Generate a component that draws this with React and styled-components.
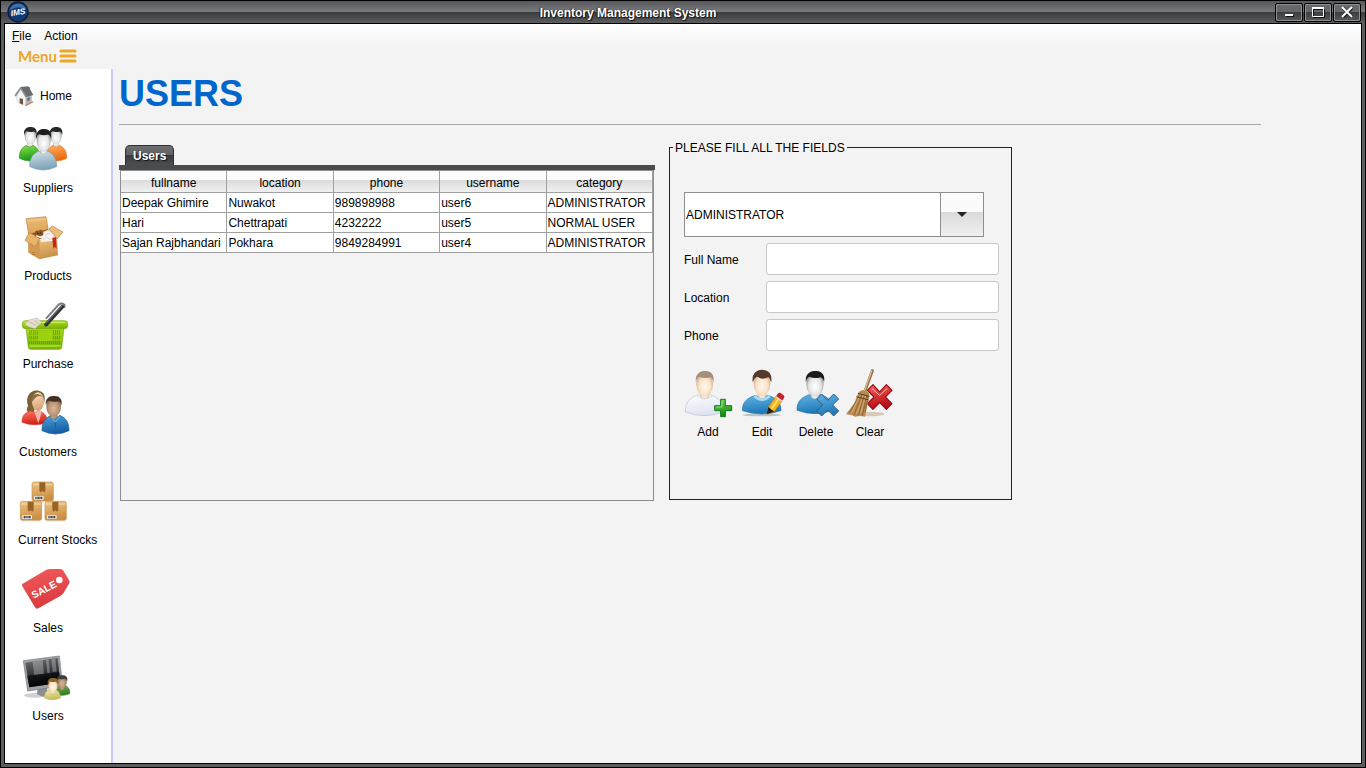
import React, { useState } from "react";
import styled, { createGlobalStyle } from "styled-components";

const GlobalStyle = createGlobalStyle`
  *, *::before, *::after { box-sizing: border-box; }
  body {
    margin: 0;
    background: #f3f3f3;
    color: #000;
    font: 12px/16px "Liberation Sans", Arial, sans-serif;
  }
  button, input, select { font: inherit; color: inherit; }
`;

/* ---------- window frame ---------- */

const Frame = styled.div`
  display: flex;
  flex-direction: column;
  min-height: 100vh;
  padding: 0 3px 3px;
  border: 1px solid #000;
  background: #5c5d5f;
`;

const TitleBar = styled.header`
  display: flex;
  align-items: center;
  height: 22px;
  margin: 0 -3px;
  padding: 0 4px 0 6px;
  background: linear-gradient(#55565a 0, #7c7c7e 11px, #3b3c3e 11px, #5c5d5f 22px);
`;

const WindowTitle = styled.div`
  flex: 1;
  padding: 2px 48px 0 0;
  text-align: center;
  font-weight: bold;
  color: #fff;
  text-shadow: 1px 1px 1px #111, -1px 0 1px #222;
  white-space: nowrap;
`;

const WindowButtons = styled.div`
  display: flex;
  gap: 1px;
`;

const WindowButton = styled.button`
  display: grid;
  place-items: center;
  width: 28px;
  height: 19px;
  padding: 0;
  border: 1px solid #000;
  border-radius: 2px;
  box-shadow: inset 0 0 0 1px #8d8f90;
  background: linear-gradient(#67686a 0 50%, #3d3e40 50%, #58595b);
`;

const Client = styled.div`
  flex: 1;
  display: flex;
  flex-direction: column;
  border: 1px solid #000;
  background: #f3f3f3;
`;

const MenuBar = styled.nav`
  display: flex;
  gap: 13px;
  height: 22px;
  padding: 4px 7px 2px;
  background: linear-gradient(#fff, #f3f3f3);
`;

const MenuButton = styled.button`
  padding: 0;
  border: 0;
  background: none;
`;

const MenuToggle = styled.button`
  display: flex;
  align-items: center;
  align-self: flex-start;
  gap: 2px;
  height: 23px;
  padding: 0 13px 3px;
  border: 0;
  background: none;
  color: #eda623;
  font: 700 15px/20px Lato, sans-serif;
`;

const Body = styled.div`
  flex: 1;
  display: flex;
`;

/* ---------- sidebar ---------- */

const Sidebar = styled.nav`
  flex: 0 0 108px;
  display: flex;
  flex-direction: column;
  align-items: flex-start;
  border-right: 2px solid #c9c9fb;
  background: #fff;
`;

const HomeButton = styled.button`
  display: flex;
  align-items: center;
  gap: 5px;
  height: 53px;
  padding: 0 8px;
  border: 0;
  background: none;
`;

const NavButton = styled.button`
  display: flex;
  flex-direction: column;
  gap: 6px;
  height: 88px;
  min-width: 58px;
  margin-left: 13px;
  padding: 0;
  border: 0;
  background: none;
  text-align: center;
`;

const NavLabel = styled.span`
  min-width: 60px;
  white-space: nowrap;
`;

/* ---------- content ---------- */

const Main = styled.main`
  flex: 1;
  min-width: 0;
  padding: 0 100px 24px 6px;
`;

const Heading = styled.h1`
  margin: 0 0 15px;
  padding: 1px 0 6px;
  border-bottom: 1px solid #a9a9a9;
  font-size: 36px;
  line-height: 48px;
  color: #0066cc;
`;

const Panels = styled.div`
  display: flex;
  align-items: flex-start;
  gap: 14px;
`;

const TablePanel = styled.section`
  flex: 0 1 536px;
  display: flex;
  flex-direction: column;
  min-height: 361px;
  padding-top: 5px;
`;

const TabStrip = styled.div`
  padding: 0 6px;
  border-bottom: 5px solid #4a4b4d;
`;

const Tab = styled.button`
  display: block;
  height: 20px;
  padding: 0 7px;
  border: 1px solid #2e2f31;
  border-bottom: 0;
  border-radius: 5px 5px 0 0;
  background: linear-gradient(#6d6e70, #5f6062 50%, #3a3b3d 50%, #4d4e50);
  color: #fff;
  font-weight: bold;
  text-shadow: 1px 1px 1px #111;
`;

const TableArea = styled.div`
  flex: 1;
  margin: 0 1px;
  border: 1px solid #8e8e8e;
`;

const DataTable = styled.table`
  width: 100%;
  table-layout: fixed;
  border-collapse: separate;
  border-spacing: 0;
`;

const HeadCell = styled.th`
  height: 22px;
  padding: 2px 0 0;
  border-right: 1px solid #a0a0a0;
  border-bottom: 1px solid #a0a0a0;
  background: linear-gradient(#fbfbfb 0 45%, #dcdcdc 45%, #f0f0f0);
  font-weight: normal;
`;

const Cell = styled.td`
  height: 20px;
  padding: 0 1px;
  border-right: 1px solid #a0a0a0;
  border-bottom: 1px solid #a0a0a0;
  background: #fff;
  white-space: nowrap;
`;

const FormPanel = styled.fieldset`
  flex: 0 1 343px;
  min-width: 0;
  min-height: 360px;
  margin: 0;
  padding: 37px 12px 24px 14px;
  border: 1px solid #222;
`;

const Legend = styled.legend`
  margin-left: -11px;
  padding: 1px 2px 0;
  line-height: 14px;
`;

const SelectBox = styled.div`
  position: relative;
  max-width: 300px;
  margin-bottom: 6px;
`;

const Select = styled.select`
  display: block;
  width: 100%;
  height: 45px;
  padding: 0 44px 0 1px;
  border: 1px solid #8e8e8e;
  border-radius: 0;
  appearance: none;
  background: #fff;
`;

const SelectArrow = styled.span`
  position: absolute;
  inset: 0 0 0 auto;
  display: grid;
  place-items: center;
  width: 44px;
  border: 1px solid #8e8e8e;
  background: linear-gradient(#fbfbfb 0 45%, #dadada 45%, #f0f0f0);
  pointer-events: none;
`;

const Field = styled.div`
  display: grid;
  grid-template-columns: 82px 1fr;
  align-items: center;
  margin-bottom: 6px;
`;

const FieldLabel = styled.label`
  padding-top: 2px;
`;

const TextInput = styled.input`
  width: 100%;
  height: 32px;
  padding: 0 6px;
  border: 1px solid #c8c8c8;
  border-radius: 3px;
  background: #fff;
`;

const Actions = styled.div`
  display: flex;
  margin: 17px 0 0 -3px;
`;

const ActionButton = styled.button`
  width: 54px;
  padding: 0;
  border: 0;
  background: none;
  text-align: center;
`;

const ActionIcon = styled.svg`
  display: block;
  width: 54px;
  height: 52px;
  margin-bottom: 4px;
`;

const NavIcon = styled.svg`
  display: block;
  width: 52px;
  height: 52px;
`;

/* ---------- drawings ---------- */

const gradients = {
  green: ["#8fe052", "#179b12"],
  orange: ["#ffb066", "#ee6a08"],
  steel: ["#d6e3ea", "#7fa3b9"],
  red: ["#ff7a66", "#d81f16"],
  blue: ["#4fa3d8", "#155fa5"],
  sky: ["#62b4e4", "#1f79b8"],
  white: ["#ffffff", "#dfe2f0"],
  skin: ["#ffe6cd", "#d8a273"],
  card: ["#efc583", "#c98f45"],
  cardLight: ["#edbd78", "#dda55a"],
  lime: ["#b5e61a", "#7cb708"],
  tag: ["#f35b5c", "#d93a3f"],
  cream: ["#f4efb0", "#c7bd62"],
  leaf: ["#6fb551", "#367d25"],
  screen: ["#74777a", "#050505"],
  plus: ["#7cdc5c", "#118b12"],
  cross: ["#f7605c", "#b90c14"],
};

/* Faces are lit from the middle and shaded towards the rim. */
const faces = {
  grey: ["#ffffff", "#e4e4e4", "#8f8f8f"],
  pale: ["#fff8ec", "#f8e2c8", "#d3a67d"],
  tan: ["#d9b799", "#b99274", "#86614a"],
};

function Defs() {
  return (
    <svg width="0" height="0" style={{ display: "block", position: "absolute" }} aria-hidden="true">
      <defs>
        {Object.entries(gradients).map(([id, [from, to]]) => (
          <linearGradient key={id} id={id} x1="0" y1="0" x2="0.25" y2="1">
            <stop offset="0" stopColor={from} />
            <stop offset="1" stopColor={to} />
          </linearGradient>
        ))}
        {Object.entries(faces).map(([id, [light, mid, rim]]) => (
          <radialGradient key={id} id={id} cx="0.5" cy="0.6" r="0.55">
            <stop offset="0" stopColor={light} />
            <stop offset="0.65" stopColor={mid} />
            <stop offset="1" stopColor={rim} />
          </radialGradient>
        ))}
      </defs>
    </svg>
  );
}

/* Shoulders of a bust: x and y give the top left corner of the body. */
function Bust({ x, y, w, h, fill, edge }) {
  const d = `M${x} ${y + h * 0.82}C${x} ${y + h * 0.35} ${x + w * 0.12} ${y + h * 0.15} ${x + w * 0.34} ${y}
    Q${x + w * 0.5} ${y + h * 0.2} ${x + w * 0.66} ${y}C${x + w * 0.88} ${y + h * 0.15} ${x + w} ${y + h * 0.35} ${x + w} ${y + h * 0.82}
    Q${x + w * 0.5} ${y + h * 1.18} ${x} ${y + h * 0.82}Z`;
  return <path d={d} fill={`url(#${fill})`} stroke={edge} strokeWidth="2" />;
}

function Head({ cx, cy, rx, ry, skin, hair }) {
  const d = `M${cx - rx - 1} ${cy - ry * 0.1}C${cx - rx - 6} ${cy - ry * 0.8} ${cx - rx * 0.5} ${cy - ry - 4} ${cx} ${cy - ry - 2}
    C${cx + rx * 0.7} ${cy - ry - 4} ${cx + rx + 6} ${cy - ry * 0.8} ${cx + rx + 1} ${cy - ry * 0.1}
    Q${cx + rx} ${cy - ry * 0.5} ${cx + rx * 0.6} ${cy - ry * 0.55}Q${cx} ${cy - ry * 0.4} ${cx - rx * 0.65} ${cy - ry * 0.58}
    Q${cx - rx} ${cy - ry * 0.5} ${cx - rx - 1} ${cy - ry * 0.1}Z`;
  return (
    <g>
      <rect x={cx - rx * 0.5} y={cy + ry * 0.5} width={rx} height={ry * 0.7} rx={rx * 0.4} fill={`url(#${skin})`} />
      <ellipse cx={cx} cy={cy} rx={rx} ry={ry} fill={`url(#${skin})`} />
      <path d={d} fill={hair} />
    </g>
  );
}

function SuppliersIcon() {
  return (
    <>
      <Bust x={4} y={70} w={62} h={47} fill="green" edge="#29912a" />
      <Head cx={37} cy={42} rx={17} ry={25} skin="grey" hair="#25282a" />
      <Bust x={84} y={70} w={62} h={47} fill="orange" edge="#dd7425" />
      <Head cx={114} cy={42} rx={17} ry={25} skin="grey" hair="#25282a" />
      <Bust x={35} y={87} w={81} h={57} fill="steel" edge="#7898aa" />
      <Head cx={77} cy={56} rx={21} ry={33} skin="grey" hair="#1b1d1f" />
    </>
  );
}

function ProductsIcon() {
  return (
    <>
      <path d="M24 26L84 20L91 62L32 72Z" fill="url(#cardLight)" stroke="#b9803c" strokeWidth="2" />
      <path d="M25 33L85 27" stroke="#f7d9a2" strokeWidth="2" />
      <path d="M33 72L88 58L117 78L64 88Z" fill="#8c5a25" />
      <path d="M54 80L58 66L65 62L73 67L80 64L90 60L101 67L114 74L112 84L86 90Z" fill="#f4f1ee" />
      <path d="M50 70Q52 58 61 63Q70 55 74 65Q80 70 73 77Q60 82 50 70Z" fill="#8c5420" />
      <path d="M57 70l5 2m5-5l3 4" stroke="#2e1807" strokeWidth="3" />
      <path d="M82 76l10 -7l8 8M88 82l10 4" stroke="#c8c5c2" strokeWidth="2" fill="none" />
      <path d="M30 88L64 90L64 148L31 128Z" fill="#d49a51" />
      <path d="M64 90L117 82L120 136L64 148Z" fill="url(#card)" />
      <path d="M64 91V147" stroke="#c48c47" strokeWidth="2" />
      <path d="M21 91L34 67L65 86L52 110Z" fill="#e7b46b" stroke="#bd843f" strokeWidth="2" />
      <path d="M66 88L88 76L106 72L118 80L112 92L70 96Z" fill="#f6f3f0" />
      <path d="M74 90l12 -8l10 6l12 -8" stroke="#cfccc8" strokeWidth="2" fill="none" />
      <path d="M93 56L103 48L135 66L117 87Z" fill="#eabd7b" stroke="#bd843f" strokeWidth="2" />
      <path d="M103 84L114 81L116 116L110 110L106 117Z" fill="#c92224" />
      <path d="M42 128h9M42 134h9" stroke="#a56f30" strokeWidth="2" />
    </>
  );
}

function PurchaseIcon() {
  const bars = Array.from({ length: 16 }, (_, i) => 34 + i * 6);
  return (
    <>
      <path d="M84 62L122 20Q134 12 140 22L138 30" fill="none" stroke="#777b7e" strokeWidth="6" />
      <path d="M24 88L138 88L131 148Q130 154 124 154H38Q32 154 31 148Z" fill="url(#lime)" stroke="#6d9f0a" strokeWidth="2" />
      {bars.map((x) => (
        <path key={x} d={`M${x} 96V138`} stroke="#558609" strokeWidth="2" />
      ))}
      <path d="M27 112H136M29 126H134" stroke="#92c916" strokeWidth="4" />
      <rect x="60" y="97" width="44" height="32" rx="3" fill="#9bd30f" />
      <path d="M35 144H128" stroke="#b8e935" strokeWidth="4" />
      <rect x="13" y="68" width="136" height="24" rx="9" fill="url(#lime)" stroke="#78a80f" strokeWidth="2" />
      <path d="M20 73H142" stroke="#d3f366" strokeWidth="3" />
      <path d="M20 80L34 65L58 60L72 74L60 83L51 92L36 88Z" fill="#e6dccb" stroke="#9f9480" strokeWidth="1" />
      <path d="M34 72l20 10m-4 -16l12 12" stroke="#b5a891" strokeWidth="2" />
      <path d="M84 80L133 26" stroke="#303336" strokeWidth="11" strokeLinecap="round" />
      <path d="M85 75L132 24" stroke="#777c80" strokeWidth="3" strokeLinecap="round" />
    </>
  );
}

function CustomersIcon() {
  return (
    <>
      <path d="M30 60C20 30 40 8 64 15C82 18 82 38 78 52L50 70Q48 84 32 80Q22 72 30 60Z" fill="#7b6136" />
      <Bust x={12} y={74} w={76} h={42} fill="red" edge="#cf372c" />
      <path d="M48 74L61 112L72 76Z" fill="#efb7a5" />
      <ellipse cx="60" cy="47" rx="18" ry="28" fill="url(#skin)" />
      <path d="M38 50C40 24 58 14 78 36C66 24 52 30 44 46Z" fill="#8d7040" />
      <Bust x={72} y={88} w={81} h={56} fill="blue" edge="#205a92" />
      <path d="M98 92L112 108L126 92" fill="none" stroke="#6cbaf0" strokeWidth="3" />
      <Head cx={107} cy={62} rx={22} ry={30} skin="tan" hair="#44301f" />
      <path d="M112 108V125" stroke="#104b83" strokeWidth="2" />
    </>
  );
}

function Carton({ x, y }) {
  return (
    <g transform={`translate(${x} ${y})`}>
      <rect width="64" height="57" rx="6" fill="url(#card)" stroke="#c8954c" strokeWidth="2" />
      <path d="M3 8H61" stroke="#f6dbab" strokeWidth="3" />
      <path d="M22 1H40V27L36 31L31 27L26 31L22 27Z" fill="#9a6326" />
      <rect x="6" y="42" width="29" height="11" rx="2" fill="#f1eee8" />
      <path d="M10 47.500H32" stroke="#42444a" strokeWidth="7" strokeDasharray="4 1 2 1" />
      <path d="M4 59H60" stroke="#ccc" strokeWidth="2" />
    </g>
  );
}

function StocksIcon() {
  return (
    <>
      <Carton x={42} y={24} />
      <Carton x={7} y={82} />
      <Carton x={81} y={82} />
    </>
  );
}

function SalesIcon() {
  return (
    <>
      <path
        d="M14 65L84 24Q90 21 97 21H127Q133 21 136 26L154 56Q156 60 153 65L136 94Q133 98 128 101L61 139Q55 143 51 136L13 73Q10 68 14 65Z"
        fill="url(#tag)"
      />
      <circle cx="124" cy="54" r="10" fill="#fff" />
      <text x="78" y="93" transform="rotate(-28 78 83)" textAnchor="middle" fontSize="30" fontWeight="bold" fill="#fff">
        SALE
      </text>
    </>
  );
}

function UsersIcon() {
  return (
    <>
      <ellipse cx="50" cy="136" rx="32" ry="7" fill="#cfd0d1" />
      <path d="M60 114L86 110L90 132L74 140L56 132Z" fill="#888e94" />
      <path d="M16 32L124 18L134 108L29 123Z" fill="#9ca4aa" stroke="#6f777d" strokeWidth="2" />
      <path d="M22 38L119 24L127 98L34 112Z" fill="url(#screen)" />
      <path d="M44 36L74 31L78 72L48 75ZM84 30L92 29L96 68L88 70ZM100 28L112 26L116 64L104 67Z" fill="#fff" opacity="0.28" />
      <path d="M27 77L124 66L127 98L34 112Z" fill="#000" opacity="0.55" />
      <Bust x={108} y={106} w={48} h={30} fill="leaf" edge="#3c7c2c" />
      <Head cx={132} cy={97} rx={14} ry={19} skin="tan" hair="#3c3e40" />
      <Bust x={79} y={118} w={48} h={31} fill="cream" edge="#b6ac57" />
      <Head cx={105} cy={106} rx={14} ry={20} skin="pale" hair="#8b6726" />
    </>
  );
}

function AddIcon() {
  return (
    <>
      <Bust x={13} y={80} w={114} h={63} fill="white" edge="#b9bed6" />
      <Head cx={71} cy={48} rx={25} ry={37} skin="pale" hair="#a78d7b" />
      <path d="M48 84Q71 102 94 84" fill="none" stroke="#d5d8e6" strokeWidth="3" />
      <path d="M119 94H133V113H152V128H133V146H119V128H101V113H119Z" fill="url(#plus)" stroke="#0d7b18" strokeWidth="3" strokeLinejoin="round" />
      <path d="M123 98V117H106" fill="none" stroke="#b8f1a1" strokeWidth="2" />
    </>
  );
}

function EditIcon() {
  return (
    <>
      <ellipse cx="80" cy="141" rx="58" ry="4" fill="#bfc3c5" />
      <Bust x={22} y={82} w={116} h={56} fill="sky" edge="#2a7aac" />
      <path d="M58 84Q81 106 104 84" fill="none" stroke="#a8daf5" strokeWidth="8" />
      <Head cx={81} cy={46} rx={25} ry={37} skin="pale" hair="#57392b" />
      <path d="M53 42Q49 8 80 5Q113 7 109 42L102 26Q82 38 68 26Q58 28 53 42Z" fill="#57392b" />
      <path d="M95 138L100 117L122 86L141 99L118 131Z" fill="#f4b322" stroke="#b8750c" strokeWidth="2" />
      <path d="M108 125L131 92" stroke="#ffe06b" strokeWidth="5" />
      <path d="M95 138L100 117L118 131Z" fill="#25201c" />
      <path d="M122 86L128 77Q132 72 137 75L146 82Q150 86 147 90L141 99Z" fill="#c6232b" />
      <path d="M122 86L141 99" stroke="#ddd" strokeWidth="4" />
    </>
  );
}

const crossPath = "M-18 -33L0 -14L18 -33L33 -18L15 0L33 18L18 33L0 15L-18 33L-33 18L-15 0L-33 -18Z";

function DeleteIcon() {
  return (
    <>
      <Bust x={24} y={80} w={108} h={57} fill="sky" edge="#226da1" />
      <Head cx={78} cy={48} rx={26} ry={37} skin="grey" hair="#18191a" />
      <path d={crossPath} transform="translate(116 111)" fill="url(#sky)" stroke="#355d78" strokeWidth="3" strokeLinejoin="round" />
    </>
  );
}

function ClearIcon() {
  return (
    <>
      <ellipse cx="70" cy="138" rx="54" ry="7" fill="#d7cbb7" />
      <path
        d={crossPath}
        transform="translate(110 87) scale(1.12)"
        fill="url(#cross)"
        stroke="#8f0a12"
        strokeWidth="3"
        strokeLinejoin="round"
      />
      <path d="M86 61L110 82L133 61" fill="none" stroke="#ffb5a9" strokeWidth="3" />
      <path d="M88 8L63 78" stroke="#94744e" strokeWidth="9" strokeLinecap="round" />
      <path d="M86 8L62 76" stroke="#d7ba8c" strokeWidth="4" strokeLinecap="round" />
      <path d="M47 72L58 66L77 73L79 82L66 146L51 143L37 146L24 140L9 139L34 106Z" fill="#bb8a51" />
      <path d="M52 78L18 137M58 78L33 141M64 80L46 142M71 82L58 143M76 84L66 132" stroke="#76502a" strokeWidth="2" />
      <path d="M54 76L25 136M62 80L40 138M68 82L53 136" stroke="#e2bd80" strokeWidth="2" />
      <path d="M45 76L79 85M40 86L77 96" stroke="#59402a" strokeWidth="3" />
    </>
  );
}

function HomeIcon() {
  return (
    <svg width="22" height="24" viewBox="0 0 66 72" aria-hidden="true">
      <path d="M9 38L24 16L38 34V64L14 56Z" fill="#f4f4f4" stroke="#aaa" strokeWidth="1" />
      <path d="M38 34L56 32V54L38 65Z" fill="#b5b6b8" />
      <path d="M43 9H50V18H43Z" fill="#5e6063" />
      <path d="M22 9L46 7L61 33L39 39Z" fill="#696b6e" />
      <path d="M22 9L4 34L9 38L23 16L37 40L41 36Z" fill="#909294" />
      <path d="M20 43L30 45V62L20 58Z" fill="#70543f" />
      <path d="M43 42L50 40V49L43 51Z" fill="#456a8a" />
      <path d="M38 65L60 53" stroke="#b98a62" strokeWidth="4" />
    </svg>
  );
}

function LogoIcon() {
  return (
    <svg width="22" height="22" viewBox="0 0 66 66" aria-hidden="true">
      <circle cx="33" cy="33" r="30" fill="#123a72" stroke="#0a1c3e" strokeWidth="4" />
      <path d="M8 28A26 26 0 0 1 58 26Q34 10 8 28Z" fill="#3f70ad" />
      <text x="33" y="42" textAnchor="middle" transform="rotate(-10 33 33)" fontSize="25" fontWeight="bold" fontStyle="italic" fill="#fff">
        IMS
      </text>
    </svg>
  );
}

/* ---------- data ---------- */

const navItems = [
  { label: "Suppliers", Drawing: SuppliersIcon },
  { label: "Products", Drawing: ProductsIcon },
  { label: "Purchase", Drawing: PurchaseIcon },
  { label: "Customers", Drawing: CustomersIcon },
  { label: "Current Stocks", Drawing: StocksIcon },
  { label: "Sales", Drawing: SalesIcon },
  { label: "Users", Drawing: UsersIcon },
];

const columns = ["fullname", "location", "phone", "username", "category"];

const users = [
  ["Deepak Ghimire", "Nuwakot", "989898988", "user6", "ADMINISTRATOR"],
  ["Hari", "Chettrapati", "4232222", "user5", "NORMAL USER"],
  ["Sajan Rajbhandari", "Pokhara", "9849284991", "user4", "ADMINISTRATOR"],
];

const fields = [
  { id: "fullname", label: "Full Name" },
  { id: "location", label: "Location" },
  { id: "phone", label: "Phone" },
];

const actions = [
  { label: "Add", Drawing: AddIcon },
  { label: "Edit", Drawing: EditIcon },
  { label: "Delete", Drawing: DeleteIcon },
  { label: "Clear", Drawing: ClearIcon },
];

export default function App() {
  const [category, setCategory] = useState("ADMINISTRATOR");

  return (
    <>
      <GlobalStyle />
      <Defs />
      <Frame>
        <TitleBar>
          <LogoIcon />
          <WindowTitle>Inventory Management System</WindowTitle>
          <WindowButtons>
            <WindowButton aria-label="Minimize">
              <svg width="14" height="12" viewBox="0 0 14 12">
                <path d="M4 10h8" stroke="#111" strokeWidth="2" />
                <path d="M3 9h8" stroke="#fff" strokeWidth="2" />
              </svg>
            </WindowButton>
            <WindowButton aria-label="Maximize">
              <svg width="14" height="12" viewBox="0 0 14 12">
                <path d="M2.500 3.500h11v8h-11z" fill="none" stroke="#111" />
                <path d="M1.500 2.500h11v8h-11z" fill="none" stroke="#fff" />
                <path d="M1 2h12" stroke="#fff" strokeWidth="2" />
              </svg>
            </WindowButton>
            <WindowButton aria-label="Close">
              <svg width="14" height="12" viewBox="0 0 14 12">
                <path d="M3 2l9 9M12 2l-9 9" stroke="#111" strokeWidth="3" />
                <path d="M2 1l10 10M12 1l-10 10" stroke="#fff" strokeWidth="2" />
              </svg>
            </WindowButton>
          </WindowButtons>
        </TitleBar>
        <Client>
          <MenuBar>
            <MenuButton>
              <u>F</u>ile
            </MenuButton>
            <MenuButton>Action</MenuButton>
          </MenuBar>
          <MenuToggle>
            Menu
            <svg width="18" height="14" viewBox="0 0 18 14" aria-hidden="true">
              <path d="M2 2h14M2 7h14M2 12h14" stroke="#eda623" strokeWidth="3" strokeLinecap="round" />
            </svg>
          </MenuToggle>
          <Body>
            <Sidebar>
              <HomeButton>
                <HomeIcon />
                Home
              </HomeButton>
              {navItems.map(({ label, Drawing }) => (
                <NavButton key={label}>
                  <NavIcon viewBox="0 0 156 156" aria-hidden="true">
                    <Drawing />
                  </NavIcon>
                  <NavLabel>{label}</NavLabel>
                </NavButton>
              ))}
            </Sidebar>
            <Main>
              <Heading>USERS</Heading>
              <Panels>
                <TablePanel>
                  <TabStrip>
                    <Tab>Users</Tab>
                  </TabStrip>
                  <TableArea>
                    <DataTable>
                      <thead>
                        <tr>
                          {columns.map((name) => (
                            <HeadCell key={name} scope="col">
                              {name}
                            </HeadCell>
                          ))}
                        </tr>
                      </thead>
                      <tbody>
                        {users.map((row) => (
                          <tr key={row[0]}>
                            {row.map((value, i) => (
                              <Cell key={columns[i]}>{value}</Cell>
                            ))}
                          </tr>
                        ))}
                      </tbody>
                    </DataTable>
                  </TableArea>
                </TablePanel>
                <FormPanel>
                  <Legend>PLEASE FILL ALL THE FIELDS</Legend>
                  <SelectBox>
                    <Select aria-label="Category" value={category} onChange={(e) => setCategory(e.target.value)}>
                      <option>ADMINISTRATOR</option>
                      <option>NORMAL USER</option>
                    </Select>
                    <SelectArrow>
                      <svg width="10" height="6" viewBox="0 0 10 6" aria-hidden="true">
                        <path d="M0 0H10L5 5Z" fill="#222" />
                      </svg>
                    </SelectArrow>
                  </SelectBox>
                  {fields.map(({ id, label }) => (
                    <Field key={id}>
                      <FieldLabel htmlFor={id}>{label}</FieldLabel>
                      <TextInput id={id} type="text" />
                    </Field>
                  ))}
                  <Actions>
                    {actions.map(({ label, Drawing }) => (
                      <ActionButton key={label} type="button">
                        <ActionIcon viewBox="0 0 162 156" aria-hidden="true">
                          <Drawing />
                        </ActionIcon>
                        {label}
                      </ActionButton>
                    ))}
                  </Actions>
                </FormPanel>
              </Panels>
            </Main>
          </Body>
        </Client>
      </Frame>
    </>
  );
}
